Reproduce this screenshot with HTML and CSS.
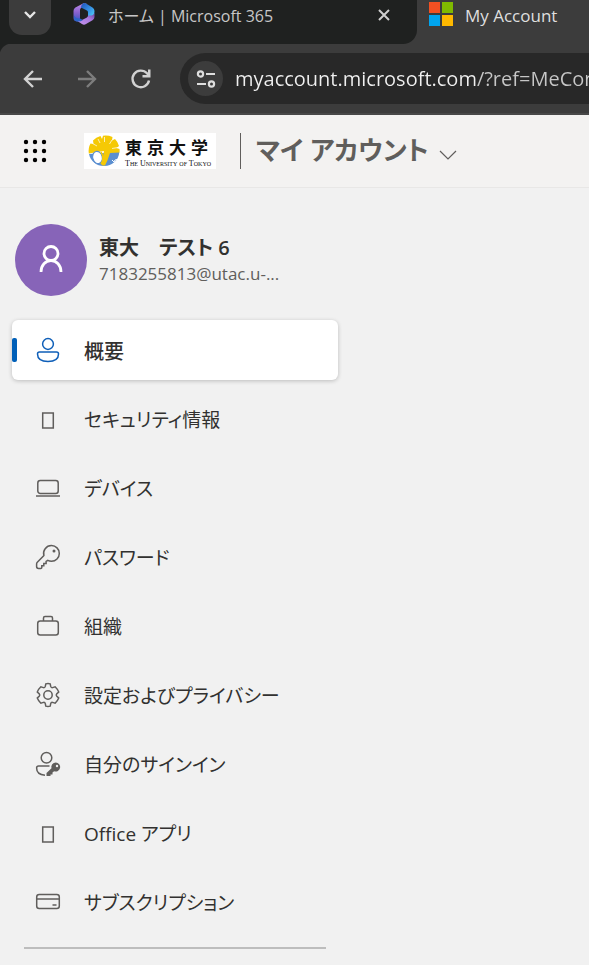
FILE: index.html
```html
<!DOCTYPE html>
<html lang="ja">
<head>
<meta charset="utf-8">
<meta name="viewport" content="width=device-width, initial-scale=1">
<title>My Account</title>
<link rel="stylesheet" href="styles.css">
</head>
<body>
<div class="tabstrip">
  <button class="tab-search" type="button" aria-label="タブを検索">
    <svg width="14" height="10" viewBox="0 0 14 10"><path d="M2 2l5 5 5-5" fill="none" stroke="#e6e6e6" stroke-width="2.4"/></svg>
  </button>
  <div class="tab">
    <svg class="tab-icon" width="24" height="24" viewBox="0 0 24 24">
      <defs>
        <linearGradient id="m1" x1="0" y1="0" x2="0" y2="1"><stop offset="0" stop-color="#c08de8"/><stop offset=".5" stop-color="#8a62d0"/><stop offset="1" stop-color="#3a52bd"/></linearGradient>
        <linearGradient id="m2" x1="0" y1="0" x2="1" y2="1"><stop offset="0" stop-color="#1d4fb8"/><stop offset=".6" stop-color="#3a9be8"/><stop offset="1" stop-color="#57dcf8"/></linearGradient>
        <linearGradient id="m3" x1="0" y1="1" x2="1" y2="0"><stop offset="0" stop-color="#c99af0"/><stop offset=".6" stop-color="#a878dc"/><stop offset="1" stop-color="#593a90"/></linearGradient>
      </defs>
      <path d="M12 1L3.400 5.500Q1.500 6.500 1.500 9v7q0 3 3 3.500Q8 20 8 16V8q0-1.500 1.500-2.500L15 2z" fill="url(#m1)"/>
      <path d="M12 1Q9 2.500 9 5.500L15 8.500q1 .5 1 2V16l5-1q1.500-2 1.500-6 0-2.500-2-3.500L14 1.500q-1-.700-2-.500z" fill="url(#m2)"/>
      <path d="M16 13.500q0 1.500-1.500 2.200L10 18q-4 2-7-.500L10 22q2 1.300 4 0l6.500-3.700q2-1.200 2-3.300V9.500q0 3-3 4z" fill="url(#m3)"/>
      <path d="M2 13.500q2 3.500 6 3l3 1.500q-5 3-8.500 0z" fill="#2b65c8"/>
    </svg>
    <span class="tab-title">ホーム | Microsoft 365</span>
    <button class="tab-close" type="button" aria-label="閉じる">
      <svg width="14" height="14" viewBox="0 0 14 14"><path d="M2 2l10 10M12 2L2 12" stroke="#d0d0d0" stroke-width="2"/></svg>
    </button>
  </div>
  <div class="tab tab-active">
    <svg class="tab-icon" width="24" height="24" viewBox="0 0 24 24">
      <path d="M0 0h11v11H0z" fill="#f25022"/><path d="M13 0h11v11H13z" fill="#7fba00"/>
      <path d="M0 13h11v11H0z" fill="#00a4ef"/><path d="M13 13h11v11H13z" fill="#ffb900"/>
    </svg>
    <span class="tab-title">My Account</span>
  </div>
</div>
<div class="toolbar">
  <button class="tool" type="button" aria-label="戻る">
    <svg width="24" height="24" viewBox="0 0 24 24"><path d="M21 12H4.500M12 4l-8 8 8 8" fill="none" stroke="#d2d2d2" stroke-width="2.400"/></svg>
  </button>
  <button class="tool" type="button" aria-label="進む">
    <svg width="24" height="24" viewBox="0 0 24 24"><path d="M3 12h16.500M12 4l8 8-8 8" fill="none" stroke="#7d7d7d" stroke-width="2.400"/></svg>
  </button>
  <button class="tool" type="button" aria-label="再読み込み">
    <svg width="24" height="24" viewBox="0 0 24 24"><path d="M20 13.500A8.300 8.300 0 1 1 18 6.300l2 2.300" fill="none" stroke="#d2d2d2" stroke-width="2.400"/><path d="M21.500 2.500v8h-8V8h5.500V2.500z" fill="#d2d2d2"/></svg>
  </button>
  <div class="address">
    <button class="site-info" type="button" aria-label="サイト情報">
      <svg width="20" height="18" viewBox="0 0 20 18" fill="none" stroke="#dedede" stroke-width="2.200"><circle cx="4.500" cy="4" r="2.600"/><path d="M10 4h9M1 14h9"/><circle cx="15.500" cy="14" r="2.600"/></svg>
    </button>
    <input class="url" type="text" aria-label="アドレス" value="myaccount.microsoft.com/?ref=MeControl">
  </div>
</div>
<header class="header">
  <button class="launcher" type="button" aria-label="アプリ起動ツール">
    <svg width="24" height="24" viewBox="0 0 24 24" fill="#000"><circle cx="3" cy="3" r="2.200"/><circle cx="12" cy="3" r="2.200"/><circle cx="21" cy="3" r="2.200"/><circle cx="3" cy="12" r="2.200"/><circle cx="12" cy="12" r="2.200"/><circle cx="21" cy="12" r="2.200"/><circle cx="3" cy="21" r="2.200"/><circle cx="12" cy="21" r="2.200"/><circle cx="21" cy="21" r="2.200"/></svg>
  </button>
  <a class="brand" href="#">
    <svg width="32" height="32" viewBox="0 0 32 32">
      <path d="M16 17h15.300A15 15 0 0 1 16 31z" fill="#5b8fd0"/>
      <path d="M1 19a15 15 0 0 0 15 12V18z" fill="#5b8fd0"/>
      <path d="M16 16L.800 18.500Q0 13 2.500 8.500L5.500 9 5 5.500Q8 2 12.500 1L14 4 15 .700q5-.700 9.500 1.300L24 5.500 27 4q3 3 4 7L28.500 13l3 1q.300 2 0 3.500L22 18q-2 7-5 12.500-2.500 0-3.500-.5z" fill="#f5c905"/>
      <path d="M9 11L4.500 8.500M12 8L10 4M16.500 7V2M21.500 9L24 5M24 13.500l6-1" stroke="#fff" stroke-width=".7"/>
      <ellipse cx="9.500" cy="22.500" rx="4.800" ry="6.200" fill="#fff" stroke="#5b8fd0" stroke-width="1.200" transform="rotate(-15 9.500 22.500)"/>
      <path d="M13 17q4 6 0 12" fill="none" stroke="#f5c905" stroke-width="1.500"/>
      <path d="M24 25l2 2 1-2 2-.500" fill="none" stroke="#fff"/>
    </svg>
    <span class="brand-text"><span class="brand-ja">東京大学</span><span class="brand-en">The University of Tokyo</span></span>
  </a>
  <button class="app-title" type="button">マイ アカウント
    <svg width="18" height="10" viewBox="0 0 18 10"><path d="M1 1l8 8 8-8" fill="none" stroke="#605e5c" stroke-width="1.200"/></svg>
  </button>
</header>
<main class="main">
  <aside class="sidebar">
    <div class="profile">
      <div class="avatar">
        <svg width="24" height="30" viewBox="0 0 24 30" fill="none" stroke="#fff" stroke-width="2.800"><circle cx="12" cy="8.500" r="7"/><path d="M2 27C2 20 6.500 15.700 12 15.700S22 20 22 27"/></svg>
      </div>
      <div class="profile-text">
        <div class="profile-name">東大　テスト 6</div>
        <div class="profile-mail">7183255813@utac.u-...</div>
      </div>
    </div>
    <nav class="nav">
      <a class="nav-item nav-current" href="#" aria-current="page">
        <svg class="icon" viewBox="0 0 24 24"><circle cx="12" cy="6" r="5.400"/><path d="M3.500 14h17q2 0 2 2 0 7.400-10.500 7.400T1.500 16q0-2 2-2z"/></svg>
        <span>概要</span></a>
      <a class="nav-item" href="#">
        <svg class="icon" viewBox="0 0 24 24"><path d="M6.700 6h10.600v15H6.700z"/></svg>
        <span>セキュリティ情報</span></a>
      <a class="nav-item" href="#">
        <svg class="icon" viewBox="0 0 24 24"><rect x="1.800" y="4.500" width="20.400" height="13" rx="2.500"/><path d="M0 20h24"/></svg>
        <span>デバイス</span></a>
      <a class="nav-item" href="#">
        <svg class="icon" viewBox="0 0 24 24"><path d="M15.500.600a7.800 7.800 0 0 0-7.600 10L1.300 17.200q-.700.700-.700 1.700v2.600q0 1.900 1.900 1.900h2.300q1 0 1-1v-1.600h2v-2.300h2.300v-2l1.700-1.200a8 8 0 0 0 3.700.900A7.800 7.800 0 0 0 15.500.600z"/><circle cx="18" cy="6" r="1.500" fill="#605e5c" stroke="none"/></svg>
        <span>パスワード</span></a>
      <a class="nav-item" href="#">
        <svg class="icon" viewBox="0 0 24 24"><rect x="1.700" y="7" width="20.600" height="14" rx="2.500"/><path d="M7.500 7V4q0-1.500 1.500-1.500h6Q16.500 2.500 16.500 4v3"/></svg>
        <span>組織</span></a>
      <a class="nav-item" href="#">
        <svg class="icon" viewBox="0 0 24 24"><circle cx="12" cy="12" r="4.200"/><path d="M9.800.900Q12 .300 14.200.900L14.700 3.400Q15.100 4.900 16.600 4.600L19.100 3.800Q21.500 6 22.700 9.100L20.700 10.900Q19.700 12 20.700 13.100L22.700 14.900Q21.500 18 19.100 20.200L16.600 19.400Q15.100 19.100 14.700 20.600L14.200 23.100Q12 23.700 9.800 23.100L9.300 20.600Q8.900 19.100 7.400 19.400L4.900 20.200Q2.500 18 1.300 14.900L3.300 13.100Q4.300 12 3.300 10.900L1.300 9.100Q2.500 6 4.900 3.800L7.400 4.600Q8.900 4.900 9.300 3.400z"/></svg>
        <span>設定およびプライバシー</span></a>
      <a class="nav-item" href="#">
        <svg class="icon" viewBox="0 0 24 24"><circle cx="10.500" cy="5.800" r="5.300"/><path d="M13.500 14H2.600Q.600 14 .600 16q0 6.500 8.400 7.300"/><path d="M19.800 10.500a4.500 4.500 0 0 0-4.300 5.800L10.500 21v3h4v-1.500h2V20.500l1.600-1.300a4.500 4.500 0 1 0 1.700-8.700z" fill="#605e5c" stroke="none"/><circle cx="21" cy="14" r="1.200" fill="#f1f1f1" stroke="none"/></svg>
        <span>自分のサインイン</span></a>
      <a class="nav-item" href="#">
        <svg class="icon" viewBox="0 0 24 24"><path d="M6.700 6h10.600v15H6.700z"/></svg>
        <span>Office アプリ</span></a>
      <a class="nav-item" href="#">
        <svg class="icon" viewBox="0 0 24 24"><rect x=".700" y="4.500" width="22.600" height="14" rx="2.500"/><path d="M.700 9h22.600M16.500 15h4"/></svg>
        <span>サブスクリプション</span></a>
    </nav>
    <hr class="divider">
  </aside>
</main>
</body>
</html>
```
FILE: styles.css
```css
* { box-sizing: border-box; }

body {
  margin: 0;
  min-height: 100vh;
  overflow-x: hidden;
  background: #f1f1f1;
  color: #323130;
  font-family: "Open Sans", "Noto Sans CJK JP", sans-serif;
  font-feature-settings: "palt";
}

button {
  display: flex;
  align-items: center;
  justify-content: center;
  padding: 0;
  border: 0;
  background: none;
  color: inherit;
  font: inherit;
  font-feature-settings: inherit;
}

svg { display: block; flex: none; }
a { color: inherit; text-decoration: none; }

/* Browser tabs */
.tabstrip {
  display: flex;
  height: 44px;
  padding-left: 9px;
  background: #3c3c3c;
  position: relative;
  isolation: isolate;
}
.tabstrip::before {
  content: "";
  position: absolute;
  z-index: -1;
  inset: 0 auto 0 0;
  width: 417px;
  background: #1f2120;
  border-bottom-right-radius: 14px;
}
.tab-search {
  width: 42px;
  height: 35px;
  padding-bottom: 6px;
  border-radius: 0 0 13px 13px;
  background: #3c3c3c;
}
.tab {
  display: flex;
  align-items: center;
  width: 366px;
  height: 30px;
  padding: 0 26px 0 21px;
  color: #c7c7c7;
  font-size: 16px;
  white-space: nowrap;
}
.tab-icon { margin: 0 12px 2px 0; }
.tab-title { flex: 1; }
.tab-active { flex: 1; padding: 0 0 0 12px; color: #dfdfdf; font-size: 17px; }

/* Browser toolbar */
.toolbar {
  display: flex;
  align-items: center;
  gap: 30px;
  height: 71px;
  padding-left: 21px;
  border-bottom: 2px solid #484848;
  background: radial-gradient(circle at 12px 12px, #3c3c3c 12px, #1f2120 13px) 0 0 / 12px 12px no-repeat #3c3c3c;
}
.address {
  display: flex;
  flex: 1;
  align-items: center;
  gap: 12px;
  min-width: 0;
  height: 51px;
  margin-left: -3px;
  padding-left: 8px;
  border-radius: 26px 0 0 26px;
  background: #282828;
}
.site-info {
  flex: none;
  width: 35px;
  height: 35px;
  border-radius: 50%;
  background: #3c3c3c;
}
.url {
  flex: 1;
  min-width: 0;
  height: 36px;
  padding: 0;
  border: 0;
  background: linear-gradient(90deg, #f0f0f0 241px, #c7c7c7 241px);
  background-clip: text;
  color: transparent;
  font: 20px "Open Sans", sans-serif;
}

/* Page header */
.header {
  display: flex;
  align-items: center;
  height: 73px;
  padding-left: 23px;
  border-bottom: 1px solid #e8e7e6;
  background: #f3f2f1;
}
.brand {
  display: flex;
  align-items: center;
  gap: 5px;
  width: 132px;
  height: 36px;
  margin: 0 24px 0 37px;
  padding-left: 4px;
  background: #fff;
  color: #111;
}
.brand-text { width: 83px; }
.brand-ja {
  display: block;
  font: 700 17px/24px "Noto Sans CJK JP", sans-serif;
  text-align-last: justify;
}
.brand-en {
  display: block;
  font: 8px/9px "Liberation Serif", serif;
  font-variant: small-caps;
  white-space: nowrap;
}
.app-title {
  align-items: baseline;
  gap: 10px;
  height: 36px;
  padding-left: 15px;
  border-left: 1px solid #605e5c;
  color: #605e5c;
  font-size: 26px;
  font-weight: 600;
  line-height: 34px;
  white-space: nowrap;
}

/* Sidebar */
.sidebar { max-width: 350px; padding: 36px 12px 16px; }
.profile {
  display: flex;
  align-items: center;
  gap: 12px;
  margin: 0 0 24px 3px;
}
.avatar {
  display: flex;
  flex: none;
  align-items: center;
  justify-content: center;
  width: 72px;
  height: 72px;
  border-radius: 50%;
  background: #8764b8;
}
.profile-name { font-size: 20px; font-weight: 600; line-height: 28px; }
.profile-mail { color: #605e5c; font-size: 17px; line-height: 24px; }
.nav { display: flex; flex-direction: column; gap: 9px; }
.nav-item {
  display: flex;
  align-items: center;
  gap: 24px;
  height: 60px;
  padding-left: 24px;
  border-radius: 6px;
  font-size: 19px;
  white-space: nowrap;
  position: relative;
}
.icon {
  width: 24px;
  height: 24px;
  fill: none;
  stroke: #605e5c;
  stroke-width: 1.5;
  overflow: visible;
}
.nav-current {
  background: #fff;
  box-shadow: 0 1px 4px rgba(0, 0, 0, .22);
  font-size: 20px;
  font-weight: 500;
}
.nav-current .icon { stroke: #0f5fb8; }
.nav-current::before {
  content: "";
  position: absolute;
  left: 0;
  top: 18px;
  width: 5px;
  height: 24px;
  border-radius: 2px;
  background: #005fb8;
}
.divider {
  height: 2px;
  margin: 15px 12px 0;
  border: 0;
  background: #bdbdbd;
}
```
